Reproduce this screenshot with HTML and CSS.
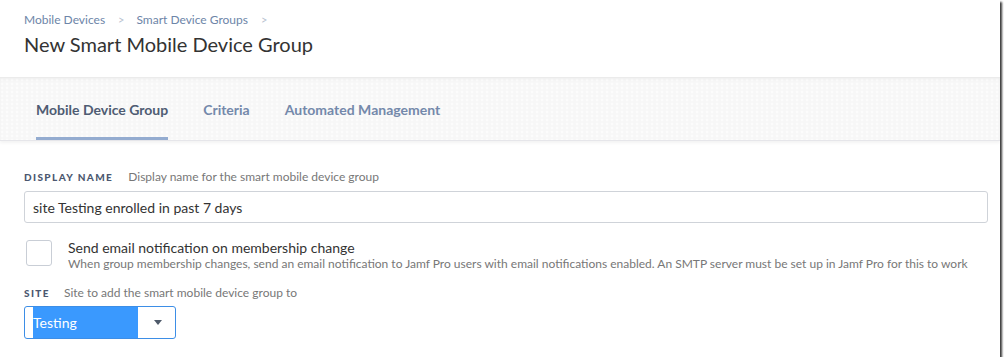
FILE: index.html
```html
<!DOCTYPE html>
<html>
<head>
<meta charset="utf-8">
<link rel="stylesheet" href="styles.css">
</head>
<body>
<div class="frame">
  <header class="header">
    <nav class="crumbs">
      <span class="crumb">Mobile Devices</span>
      <span class="sep">&gt;</span>
      <span class="crumb">Smart Device Groups</span>
      <span class="sep">&gt;</span>
    </nav>
    <h1 class="title">New Smart Mobile Device Group</h1>
  </header>
  <div class="tabbar">
    <div class="tab active">Mobile Device Group</div>
    <div class="tab">Criteria</div>
    <div class="tab">Automated Management</div>
  </div>
  <main class="form">
    <div class="field">
      <div class="label-row"><span class="label">Display Name</span><span class="hint">Display name for the smart mobile device group</span></div>
      <div class="input">site Testing enrolled in past 7 days</div>
    </div>
    <div class="check-row">
      <div class="checkbox"></div>
      <div class="check-text">
        <div class="check-title">Send email notification on membership change</div>
        <div class="check-hint">When group membership changes, send an email notification to Jamf Pro users with email notifications enabled. An SMTP server must be set up in Jamf Pro for this to work</div>
      </div>
    </div>
    <div class="field site">
      <div class="label-row"><span class="label">Site</span><span class="hint">Site to add the smart mobile device group to</span></div>
      <div class="select">
        <span class="selected">Testing</span>
        <svg class="caret" width="8" height="5" viewBox="0 0 8 5"><path d="M0 0h8L4 5z" fill="#4f5a6a"/></svg>
      </div>
    </div>
  </main>
</div>
</body>
</html>
```
FILE: styles.css
```css
html, body { margin: 0; padding: 0; background: #fff; }
body { font-family: Lato, "Open Sans", sans-serif; color: #333; }
.frame {
  width: 1000px;
  height: 357px;
  overflow: hidden;
  background: #fff;
  box-shadow: 2px 2px 2px #3a3a3a;
  display: flex;
  flex-direction: column;
}
.header { padding: 12px 24px 0; height: 77px; box-sizing: border-box; flex: none; }
.crumbs { display: flex; font-size: 12px; color: #6d85a8; line-height: 16px; }
.sep { color: #b8c2d0; margin: 0 12px 0 13px; font-size: 11px; }
.title { margin: 3px 0 0; font-size: 20px; font-weight: 400; color: #333; line-height: 26px; }
.tabbar {
  height: 64px;
  flex: none;
  box-sizing: border-box;
  display: flex;
  align-items: stretch;
  padding-left: 36px;
  gap: 35px;
  background-color: #f7f7f7;
  background-image: radial-gradient(circle at 2px 2px, #fcfcfc 1.3px, transparent 1.6px);
  background-size: 5px 4px;
  border-top: 1px solid #ebebeb;
  border-bottom: 1px solid #e6e6ea;
  box-shadow: inset 0 2px 3px rgba(0,0,0,0.03), 0 2px 3px rgba(0,0,0,0.05);
}
.tab {
  display: flex; align-items: center;
  font-size: 14px; font-weight: 700; color: #7489ab;
  padding-top: 3px;
  border-bottom: 3px solid transparent;
}
.tab.active { color: #4f5c73; border-bottom-color: #94acd0; }
.form { padding: 28px 12px 0 24px; }
.label-row { display: flex; align-items: baseline; line-height: 15px; }
.label { text-transform: uppercase; font-size: 10px; font-weight: 900; letter-spacing: 1.4px; color: #4c5870; margin-right: 15px; }
.site .label { margin-right: 14px; }
.hint { font-size: 12px; color: #777; }
.input {
  margin-top: 6px;
  height: 32px; box-sizing: border-box;
  border: 1px solid #cfd3d9; border-radius: 3px;
  padding: 0 8px; display: flex; align-items: center;
  font-size: 14px; color: #333;
}
.check-row { display: flex; margin-top: 17px; }
.checkbox { width: 24px; height: 24px; border: 1px solid #c9ced6; border-radius: 3px; margin-left: 2px; margin-right: 16px; flex: none; }
.check-title { font-size: 14px; color: #333; line-height: 16px; }
.check-hint { font-size: 12px; color: #777; line-height: 16px; white-space: nowrap; }
.site { margin-top: 13px; }
.select {
  margin-top: 5px;
  width: 152px; height: 33px; box-sizing: border-box;
  border: 1px solid #3d8ee6; border-radius: 3px;
  display: flex; align-items: center; justify-content: space-between;
  padding: 0 13px 0 8px;
}
.selected { background: #3a99fe; color: #fff; font-size: 14px; width: 105px; height: 31px; display: flex; align-items: center; }
.caret { display: block; }
```
